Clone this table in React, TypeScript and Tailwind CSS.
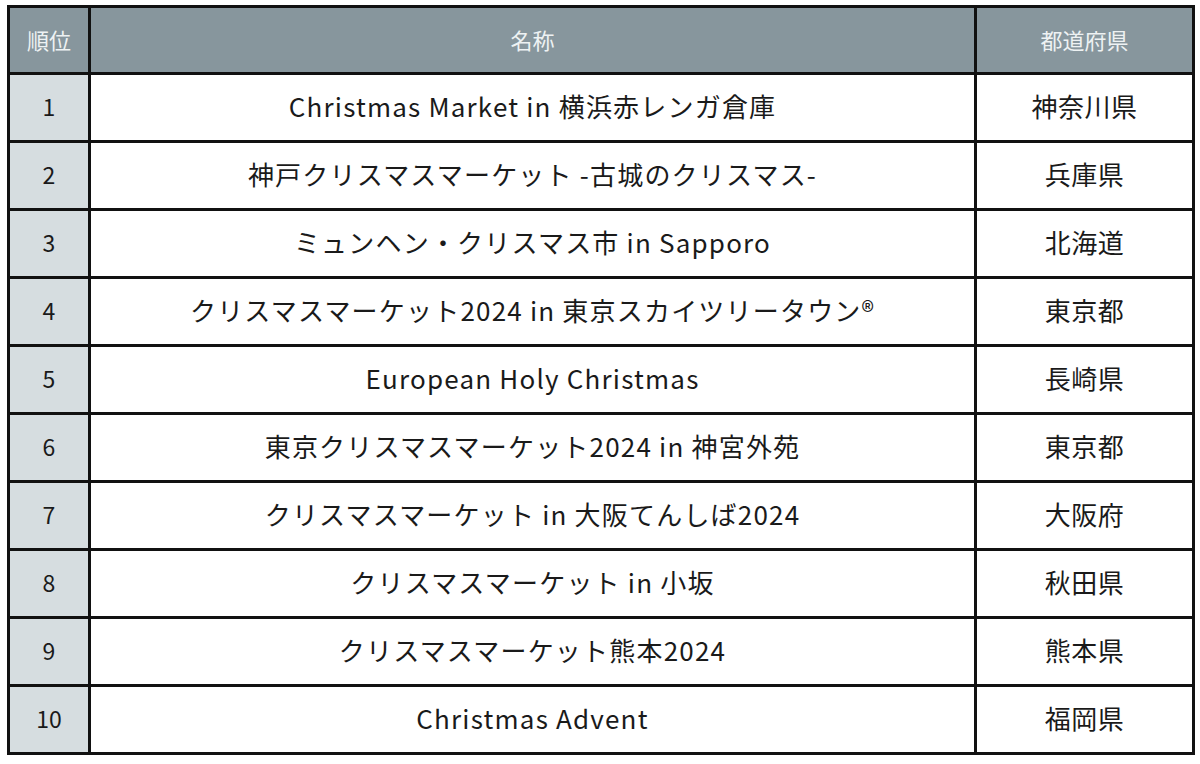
const rows: [string, string, string][] = [
  ["1", "Christmas Market in 横浜赤レンガ倉庫", "神奈川県"],
  ["2", "神戸クリスマスマーケット -古城のクリスマス-", "兵庫県"],
  ["3", "ミュンヘン・クリスマス市 in Sapporo", "北海道"],
  ["4", "クリスマスマーケット2024 in 東京スカイツリータウン®", "東京都"],
  ["5", "European Holy Christmas", "長崎県"],
  ["6", "東京クリスマスマーケット2024 in 神宮外苑", "東京都"],
  ["7", "クリスマスマーケット in 大阪てんしば2024", "大阪府"],
  ["8", "クリスマスマーケット in 小坂", "秋田県"],
  ["9", "クリスマスマーケット熊本2024", "熊本県"],
  ["10", "Christmas Advent", "福岡県"],
];

export default function App() {
  return (
    <div className="w-[1200px] h-[764px] bg-white pt-[5px] pl-[7px] font-['Noto_Sans_CJK_JP','Noto_Sans',sans-serif]">
      <table className="table-fixed border-collapse border-[3px] border-[#111] w-[1185px]">
        <colgroup>
          <col className="w-[81px]" />
          <col className="w-[886px]" />
          <col className="w-[218px]" />
        </colgroup>
        <thead>
          <tr className="h-[67px] bg-[#87969d] text-[#eef2f3] text-[22px] leading-none">
            <th className="border-[3px] border-[#111] font-normal pb-[3px]">順位</th>
            <th className="border-[3px] border-[#111] font-normal pb-[3px]">名称</th>
            <th className="border-[3px] border-[#111] font-normal pb-[3px]">都道府県</th>
          </tr>
        </thead>
        <tbody>
          {rows.map(([rank, name, pref]) => (
            <tr key={rank} className="h-[68px] text-[#1a1a1a] leading-none">
              <td className="border-[3px] border-[#111] bg-[#d6dde0] text-center text-[23px] pb-[2px]">{rank}</td>
              <td className="border-[3px] border-[#111] bg-white text-center text-[26px] tracking-[1.2px] pb-[4px]">{name}</td>
              <td className="border-[3px] border-[#111] bg-white text-center text-[26px] tracking-[0.5px] pb-[4px]">{pref}</td>
            </tr>
          ))}
        </tbody>
      </table>
    </div>
  );
}
